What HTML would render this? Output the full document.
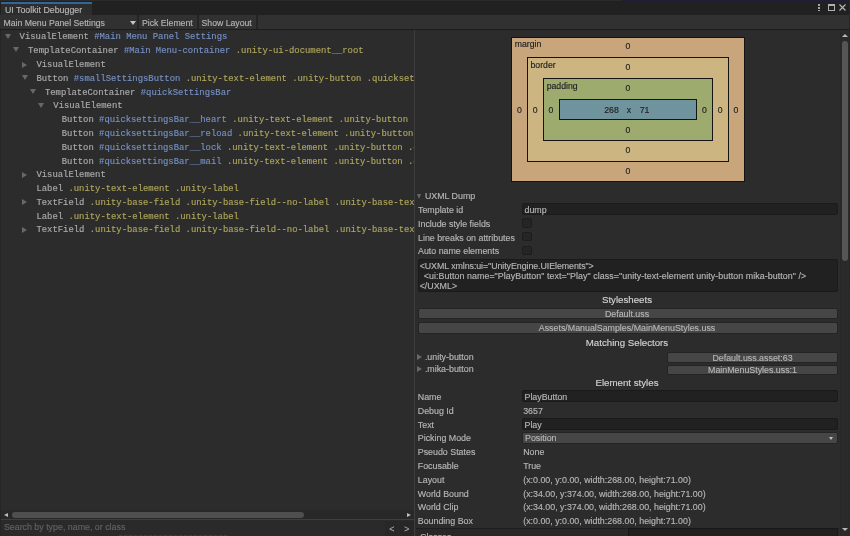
<!DOCTYPE html>
<html><head><meta charset="utf-8">
<style>
*{margin:0;padding:0;box-sizing:border-box}
html,body{width:850px;height:536px;overflow:hidden;background:#2c2c2c}
body{position:relative;will-change:transform;-webkit-text-stroke:0.15px;font-family:"Liberation Sans",sans-serif;font-size:8.7px;color:#c4c4c4}
.abs{position:absolute}
#tabbar{position:absolute;left:0;top:0;width:850px;height:15px;background:#212121}
#topline{position:absolute;left:0;top:0;width:622px;height:1px;background:#2a2a2a}
#tab{position:absolute;left:1px;top:2px;width:91px;height:13px;background:#2d2d2d;border-top:2px solid #31669a}
#tab span{position:absolute;left:4px;top:1px;font-size:8.8px;color:#b8b8b8;white-space:nowrap}
#toolbar{position:absolute;left:0;top:15px;width:850px;height:14px;background:#313131}
#tbline{position:absolute;left:0;top:29px;width:850px;height:1px;background:#1c1c1c}
.tbtxt{position:absolute;top:2.6px;font-size:8.7px;color:#b4b4b4;white-space:nowrap}
.tbsep{position:absolute;top:0;width:1.5px;height:14px;background:#242424}
#tree{position:absolute;left:0;top:30px;width:414px;height:480px;overflow:hidden;background:#2c2c2c}
.row{position:absolute;left:0;width:414px;height:14px}
.txt{position:absolute;top:0;font-family:"Liberation Mono",monospace;font-size:8.9px;white-space:nowrap;line-height:14px}
.t{color:#acacac}.n{color:#7590c6}.c{color:#aea65c}
.tri-d{position:absolute;top:3.2px;width:0;height:0;border-left:3.2px solid transparent;border-right:3.2px solid transparent;border-top:5.8px solid #686868}
.tri-r{position:absolute;top:3.6px;width:0;height:0;border-top:3.2px solid transparent;border-bottom:3.2px solid transparent;border-left:5.6px solid #686868}
#divider{position:absolute;left:414px;top:30px;width:1px;height:506px;background:#3e3e3e}
#right{position:absolute;left:415px;top:30px;width:435px;height:506px;background:#2c2c2c;overflow:hidden}
.lbl{position:absolute;white-space:nowrap;font-size:8.85px;color:#b6b6b6}
.field{position:absolute;background:#1f1f1f;border-radius:2px}
.btn{position:absolute;background:#454545;border-radius:2px}
.hdr{position:absolute;white-space:nowrap;font-size:9.7px;color:#d2d2d2}
.mid{line-height:0}
.bm{position:absolute;white-space:nowrap;font-size:8.7px;color:#222;line-height:0}
</style></head><body>
<div id="tabbar"></div>
<div id="topline"></div>
<div id="tab"><span>UI Toolkit Debugger</span></div>
<div id="toolbar">
  <div class="tbtxt" style="left:3.5px">Main Menu Panel Settings</div>
  <div class="abs" style="left:130px;top:5.5px;width:0;height:0;border-left:3px solid transparent;border-right:3px solid transparent;border-top:4px solid #c4c4c4"></div>
  <div class="tbsep" style="left:137px"></div>
  <div class="tbtxt" style="left:142px">Pick Element</div>
  <div class="tbsep" style="left:197px"></div>
  <div class="tbtxt" style="left:201.5px">Show Layout</div>
  <div class="tbsep" style="left:256px"></div>
</div>
<div id="tbline"></div>
<div id="tree">
<div class="row" style="top:0.40px"><div class="tri-d" style="left:4.70px"></div><div class="txt" style="left:19.60px"><span class="t">VisualElement</span> <span class="n">#Main Menu Panel Settings</span></div></div>
<div class="row" style="top:14.19px"><div class="tri-d" style="left:13.14px"></div><div class="txt" style="left:28.04px"><span class="t">TemplateContainer</span> <span class="n">#Main Menu-container</span> <span class="c">.unity-ui-document__root</span></div></div>
<div class="row" style="top:27.98px"><div class="tri-r" style="left:21.88px"></div><div class="txt" style="left:36.48px"><span class="t">VisualElement</span></div></div>
<div class="row" style="top:41.77px"><div class="tri-d" style="left:21.58px"></div><div class="txt" style="left:36.48px"><span class="t">Button</span> <span class="n">#smallSettingsButton</span> <span class="c">.unity-text-element</span> <span class="c">.unity-button</span> <span class="c">.quicksettings-button</span></div></div>
<div class="row" style="top:55.56px"><div class="tri-d" style="left:30.02px"></div><div class="txt" style="left:44.92px"><span class="t">TemplateContainer</span> <span class="n">#quickSettingsBar</span></div></div>
<div class="row" style="top:69.35px"><div class="tri-d" style="left:38.46px"></div><div class="txt" style="left:53.36px"><span class="t">VisualElement</span></div></div>
<div class="row" style="top:83.14px"><div class="txt" style="left:61.80px"><span class="t">Button</span> <span class="n">#quicksettingsBar__heart</span> <span class="c">.unity-text-element</span> <span class="c">.unity-button</span> <span class="c">.quicksettings-button</span></div></div>
<div class="row" style="top:96.93px"><div class="txt" style="left:61.80px"><span class="t">Button</span> <span class="n">#quicksettingsBar__reload</span> <span class="c">.unity-text-element</span> <span class="c">.unity-button</span> <span class="c">.quicksettings-button</span></div></div>
<div class="row" style="top:110.72px"><div class="txt" style="left:61.80px"><span class="t">Button</span> <span class="n">#quicksettingsBar__lock</span> <span class="c">.unity-text-element</span> <span class="c">.unity-button</span> <span class="c">.quicksettings-button</span></div></div>
<div class="row" style="top:124.51px"><div class="txt" style="left:61.80px"><span class="t">Button</span> <span class="n">#quicksettingsBar__mail</span> <span class="c">.unity-text-element</span> <span class="c">.unity-button</span> <span class="c">.quicksettings-button</span></div></div>
<div class="row" style="top:138.30px"><div class="tri-r" style="left:21.88px"></div><div class="txt" style="left:36.48px"><span class="t">VisualElement</span></div></div>
<div class="row" style="top:152.09px"><div class="txt" style="left:36.48px"><span class="t">Label</span> <span class="c">.unity-text-element</span> <span class="c">.unity-label</span></div></div>
<div class="row" style="top:165.88px"><div class="tri-r" style="left:21.88px"></div><div class="txt" style="left:36.48px"><span class="t">TextField</span> <span class="c">.unity-base-field</span> <span class="c">.unity-base-field--no-label</span> <span class="c">.unity-base-text-field</span></div></div>
<div class="row" style="top:179.67px"><div class="txt" style="left:36.48px"><span class="t">Label</span> <span class="c">.unity-text-element</span> <span class="c">.unity-label</span></div></div>
<div class="row" style="top:193.46px"><div class="tri-r" style="left:21.88px"></div><div class="txt" style="left:36.48px"><span class="t">TextField</span> <span class="c">.unity-base-field</span> <span class="c">.unity-base-field--no-label</span> <span class="c">.unity-base-text-field</span></div></div>
</div>
<div id="divider"></div>
<div id="right"></div>
<div class="abs" style="left:511.4px;top:36.6px;width:233.60000000000002px;height:145.4px;background:#c9a57c;border:1px solid #141414"></div>
<div class="abs" style="left:527px;top:57.2px;width:201.70000000000005px;height:104.8px;background:#ccb580;border:1px solid #141414"></div>
<div class="abs" style="left:543px;top:78px;width:169.79999999999995px;height:62.900000000000006px;background:#9dab6f;border:1px solid #141414"></div>
<div class="abs" style="left:559px;top:99.1px;width:137.60000000000002px;height:20.80000000000001px;background:#6f949d;border:1px solid #141414"></div>
<div class="bm" style="left:514.7px;top:44px;">margin</div>
<div class="bm" style="left:530.5px;top:65px;">border</div>
<div class="bm" style="left:546.7px;top:86px;">padding</div>
<div class="bm" style="left:527.8px;top:46.2px;width:200px;text-align:center;line-height:0">0</div>
<div class="bm" style="left:527.8px;top:67.3px;width:200px;text-align:center;line-height:0">0</div>
<div class="bm" style="left:527.8px;top:88.1px;width:200px;text-align:center;line-height:0">0</div>
<div class="bm" style="left:527.8px;top:129.7px;width:200px;text-align:center;line-height:0">0</div>
<div class="bm" style="left:527.8px;top:150.2px;width:200px;text-align:center;line-height:0">0</div>
<div class="bm" style="left:527.8px;top:171px;width:200px;text-align:center;line-height:0">0</div>
<div class="bm" style="left:419.29999999999995px;top:109.5px;width:200px;text-align:center;line-height:0">0</div>
<div class="bm" style="left:435.20000000000005px;top:109.5px;width:200px;text-align:center;line-height:0">0</div>
<div class="bm" style="left:451px;top:109.5px;width:200px;text-align:center;line-height:0">0</div>
<div class="bm" style="left:604.3px;top:109.5px;width:200px;text-align:center;line-height:0">0</div>
<div class="bm" style="left:620.2px;top:109.5px;width:200px;text-align:center;line-height:0">0</div>
<div class="bm" style="left:636px;top:109.5px;width:200px;text-align:center;line-height:0">0</div>
<div class="bm" style="left:511.5px;top:109.5px;width:200px;text-align:center;line-height:0">268</div>
<div class="bm" style="left:529px;top:109.5px;width:200px;text-align:center;line-height:0">x</div>
<div class="bm" style="left:544.5px;top:109.5px;width:200px;text-align:center;line-height:0">71</div>
<div class="abs" style="left:416.6px;top:193.8px;width:0;height:0;border-left:2.8px solid transparent;border-right:2.8px solid transparent;border-top:5px solid #686868"></div>
<div class="lbl mid" style="left:424.9px;top:196px;">UXML Dump</div>
<div class="lbl mid" style="left:418px;top:210.0px;">Template id</div>
<div class="lbl mid" style="left:418px;top:223.8px;">Include style fields</div>
<div class="lbl mid" style="left:418px;top:237.6px;">Line breaks on attributes</div>
<div class="lbl mid" style="left:418px;top:251.4px;">Auto name elements</div>
<div class="abs" style="left:522.2px;top:203px;width:315.79999999999995px;height:12.300000000000011px;background:#212121;border-radius:2px;border:1px solid #1b1b1b"></div>
<div class="lbl mid" style="left:524.5px;top:210px;">dump</div>
<div class="abs" style="left:522.2px;top:218.4px;width:9.599999999999909px;height:9.400000000000006px;background:#252525;border-radius:2px;border:1px solid #1d1d1d"></div>
<div class="abs" style="left:522.2px;top:232.1px;width:9.599999999999909px;height:9.400000000000006px;background:#252525;border-radius:2px;border:1px solid #1d1d1d"></div>
<div class="abs" style="left:522.2px;top:245.8px;width:9.599999999999909px;height:9.400000000000006px;background:#252525;border-radius:2px;border:1px solid #1d1d1d"></div>
<div class="abs" style="left:417.5px;top:259.2px;width:420.5px;height:32.400000000000034px;background:#212121;border-radius:2px;border:1px solid #1a1a1a"></div>
<div class="lbl mid" style="left:419.7px;top:266px;letter-spacing:-0.07px">&lt;UXML xmlns:ui="UnityEngine.UIElements"&gt;</div>
<div class="lbl mid" style="left:423.7px;top:276px;letter-spacing:0.07px">&lt;ui:Button name="PlayButton" text="Play" class="unity-text-element unity-button mika-button" /&gt;</div>
<div class="lbl mid" style="left:419.7px;top:286px;">&lt;/UXML&gt;</div>
<div class="hdr mid" style="left:527px;top:300px;width:200px;text-align:center;">Stylesheets</div>
<div class="abs" style="left:418.2px;top:307.6px;width:419.8px;height:11.799999999999955px;background:#464646;border-radius:2px;border:1px solid #242424"></div>
<div class="lbl mid" style="left:527px;top:313.6px;width:200px;text-align:center;">Default.uss</div>
<div class="abs" style="left:418.2px;top:321.9px;width:419.8px;height:12.100000000000023px;background:#464646;border-radius:2px;border:1px solid #242424"></div>
<div class="lbl mid" style="left:527px;top:328px;width:200px;text-align:center;">Assets/ManualSamples/MainMenuStyles.uss</div>
<div class="hdr mid" style="left:527px;top:342.5px;width:200px;text-align:center;">Matching Selectors</div>
<div class="abs" style="left:417.2px;top:353.9px;width:0;height:0;border-top:3.1px solid transparent;border-bottom:3.1px solid transparent;border-left:5.4px solid #686868"></div>
<div class="lbl mid" style="left:424.9px;top:357px;">.unity-button</div>
<div class="abs" style="left:417.2px;top:366.1px;width:0;height:0;border-top:3.1px solid transparent;border-bottom:3.1px solid transparent;border-left:5.4px solid #686868"></div>
<div class="lbl mid" style="left:424.9px;top:369px;">.mika-button</div>
<div class="abs" style="left:667px;top:352px;width:171px;height:11px;background:#464646;border-radius:2px;border:1px solid #242424"></div>
<div class="lbl mid" style="left:652.5px;top:357.5px;width:200px;text-align:center;">Default.uss.asset:63</div>
<div class="abs" style="left:667px;top:364.7px;width:171px;height:10.0px;background:#464646;border-radius:2px;border:1px solid #242424"></div>
<div class="lbl mid" style="left:652.5px;top:369.7px;width:200px;text-align:center;">MainMenuStyles.uss:1</div>
<div class="hdr mid" style="left:527px;top:382.5px;width:200px;text-align:center;">Element styles</div>
<div class="lbl mid" style="left:417.8px;top:397.0px;">Name</div>
<div class="abs" style="left:522.2px;top:390.2px;width:315.79999999999995px;height:12.199999999999989px;background:#212121;border-radius:2px;border:1px solid #1a1a1a"></div>
<div class="lbl mid" style="left:524.5px;top:397.0px;">PlayButton</div>
<div class="lbl mid" style="left:417.8px;top:410.8px;">Debug Id</div>
<div class="lbl mid" style="left:523.2px;top:410.8px;">3657</div>
<div class="lbl mid" style="left:417.8px;top:424.6px;">Text</div>
<div class="abs" style="left:522.2px;top:417.8px;width:315.79999999999995px;height:12.199999999999989px;background:#212121;border-radius:2px;border:1px solid #1a1a1a"></div>
<div class="lbl mid" style="left:524.5px;top:424.6px;">Play</div>
<div class="lbl mid" style="left:417.8px;top:438.4px;">Picking Mode</div>
<div class="abs" style="left:522.2px;top:432.2px;width:315.79999999999995px;height:11.399999999999977px;background:#464646;border-radius:2px;border:1px solid #242424"></div>
<div class="lbl mid" style="left:525px;top:438.4px;">Position</div>
<div class="abs" style="left:828.6px;top:437.09999999999997px;width:0;height:0;border-left:2.7px solid transparent;border-right:2.7px solid transparent;border-top:3.4px solid #c0c0c0"></div>
<div class="lbl mid" style="left:417.8px;top:452.2px;">Pseudo States</div>
<div class="lbl mid" style="left:523.2px;top:452.2px;">None</div>
<div class="lbl mid" style="left:417.8px;top:466.0px;">Focusable</div>
<div class="lbl mid" style="left:523.2px;top:466.0px;">True</div>
<div class="lbl mid" style="left:417.8px;top:479.8px;">Layout</div>
<div class="lbl mid" style="left:523.2px;top:479.8px;">(x:0.00, y:0.00, width:268.00, height:71.00)</div>
<div class="lbl mid" style="left:417.8px;top:493.6px;">World Bound</div>
<div class="lbl mid" style="left:523.2px;top:493.6px;">(x:34.00, y:374.00, width:268.00, height:71.00)</div>
<div class="lbl mid" style="left:417.8px;top:507.4px;">World Clip</div>
<div class="lbl mid" style="left:523.2px;top:507.4px;">(x:34.00, y:374.00, width:268.00, height:71.00)</div>
<div class="lbl mid" style="left:417.8px;top:521.2px;">Bounding Box</div>
<div class="lbl mid" style="left:523.2px;top:521.2px;">(x:0.00, y:0.00, width:268.00, height:71.00)</div>
<div class="abs" style="left:416px;top:528px;width:423px;height:8px;background:#282828;border-top:1px solid #1e1e1e"></div>
<div class="abs" style="left:627.5px;top:528.3px;width:210.5px;height:8.700000000000045px;background:#202020;border-radius:2px;border:1px solid #181818"></div>
<div class="lbl mid" style="left:420px;top:536.5px;">Classes</div>
<div class="abs" style="left:840px;top:30px;width:10px;height:506px;background:#2a2a2a;border-left:1px solid #272727"></div>
<div class="abs" style="left:842.2px;top:33.7px;width:0;height:0;border-left:3px solid transparent;border-right:3px solid transparent;border-bottom:3.6px solid #b8b8b8"></div>
<div class="abs" style="left:841.8px;top:41.2px;width:6.5px;height:219.5px;background:#555555;border-radius:3px"></div>
<div class="abs" style="left:842.2px;top:528.2px;width:0;height:0;border-left:3px solid transparent;border-right:3px solid transparent;border-top:3.6px solid #b8b8b8"></div>
<div class="abs" style="left:0;top:510px;width:414px;height:9px;background:#282828"></div>
<div class="abs" style="left:4.2px;top:513.2px;width:0;height:0;border-top:2.5px solid transparent;border-bottom:2.5px solid transparent;border-right:4px solid #bdbdbd"></div>
<div class="abs" style="left:12.3px;top:511.9px;width:292px;height:6.6px;background:#4f4f4f;border-radius:3.3px"></div>
<div class="abs" style="left:406.8px;top:513.2px;width:0;height:0;border-top:2.5px solid transparent;border-bottom:2.5px solid transparent;border-left:4px solid #bdbdbd"></div>
<div class="abs" style="left:0;top:519px;width:414px;height:1px;background:#3e3e3e"></div>
<div class="abs" style="left:0;top:520px;width:414px;height:16px;background:#2a2a2a"></div>
<div class="lbl mid" style="left:3.9px;top:527.3px;color:#626262">Search by type, name, or class</div>
<div class="abs" style="left:0;top:30px;width:1px;height:506px;background:#252525"></div>
<div class="abs" style="left:384.7px;top:520.5px;width:13px;height:15.5px;background:#272727"></div>
<div class="abs" style="left:399.4px;top:520.5px;width:14.6px;height:15.5px;background:#272727"></div>
<div class="lbl mid" style="left:389.3px;top:529px;color:#a8a8a8">&lt;</div>
<div class="lbl mid" style="left:404.2px;top:529px;color:#a8a8a8">&gt;</div>
<div class="abs" style="left:119px;top:535px;width:109px;height:1px;background:repeating-linear-gradient(90deg,#3c3c3c 0 3px,#303030 3px 5px)"></div>
<div class="abs" style="left:818.3px;top:4.2px;width:1.8px;height:1.6px;background:#a8a8a8"></div>
<div class="abs" style="left:818.3px;top:7px;width:1.8px;height:1.6px;background:#a8a8a8"></div>
<div class="abs" style="left:818.3px;top:9.8px;width:1.8px;height:1.6px;background:#a8a8a8"></div>
<div class="abs" style="left:828px;top:4px;width:7px;height:7px;border:1px solid #b0b0b0;border-top-width:2px"></div>
<div class="abs" style="left:622px;top:0;width:228px;height:1px;background:#231e38"></div>
<div class="abs" style="left:849px;top:0;width:1px;height:288px;background:#2c2134"></div>
<svg class="abs" style="left:839px;top:4.3px" width="7" height="7" viewBox="0 0 7 7"><path d="M0.5 0.5L6.5 6.5M6.5 0.5L0.5 6.5" stroke="#b8b8b8" stroke-width="1.1"/></svg>
</body></html>
